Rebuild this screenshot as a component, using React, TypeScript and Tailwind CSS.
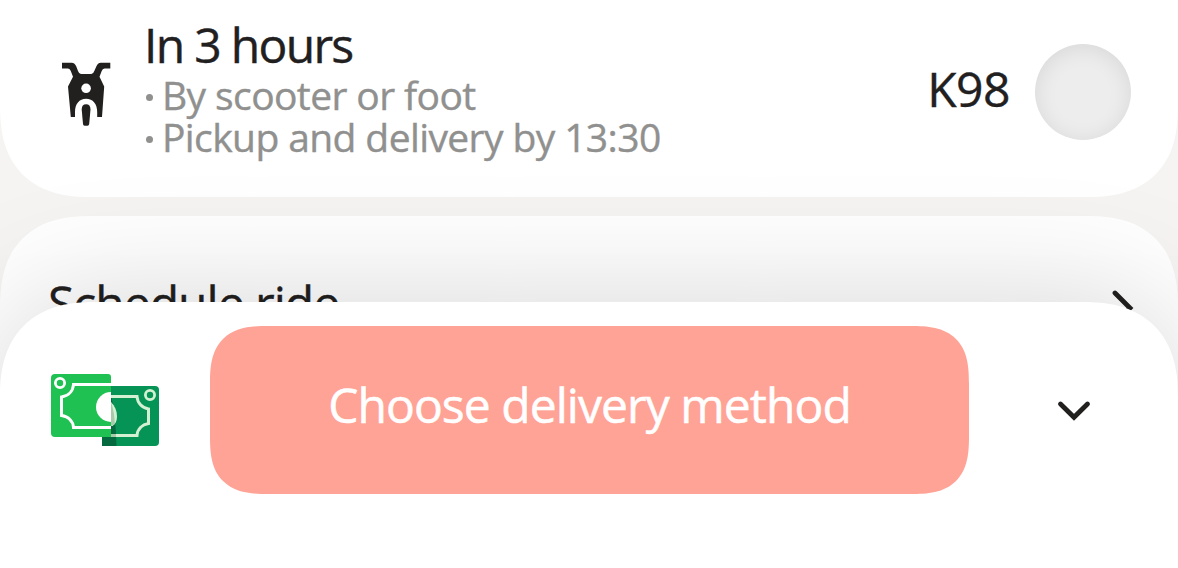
const ScooterIcon = () => (
  <svg width="50" height="66" viewBox="0 0 50 66" fill="none" className="shrink-0">
    <path
      d="M0 0.700H9.500C12 0.700 13.300 2 14.300 4.500L16 9Q17 12 19 12H29.300Q31.300 12 32.300 9L34.300 4.500C35.300 2 36.500 0.700 39 0.700H48.300V6.500H42.500Q40.500 6.500 39.700 9L37.500 14.700L42.200 24.500L40 55H35.200V50C35.200 42 31 36.700 24.100 36.700C17.200 36.700 13 42 13 50V55H8.800L6 24.500L11 14.700L8.800 9Q8 6.500 6 6.500H0Z"
      fill="#21201f"
    />
    <circle cx="24.100" cy="26.300" r="4.800" fill="#fff" />
    <path d="M19.700 47.500Q19.700 42.300 24.100 42.300T28.500 47.500L27.200 62Q27 63.800 25.500 63.800H22.500Q21.200 63.800 21 62Z" fill="#21201f" />
  </svg>
);

const CashIcon = () => (
  <svg width="108" height="72" viewBox="0 0 108 72" fill="none" className="shrink-0">
    <path d="M51 12H104A4 4 0 0 1 108 16V68A4 4 0 0 1 104 72H51Z" fill="#069456" />
    <path d="M51 63H60V20Q65 45 65.500 72H51Z" fill="#04693e" />
    <path d="M60 22.5H86C86.5 29 91 34 97.500 35V49.500C91 50.500 86.500 55 86 61.500H60" stroke="#d4f0d3" strokeWidth="3" />
    <circle cx="99" cy="21" r="4.600" stroke="#d4f0d3" strokeWidth="2.800" />
    <path d="M60 28C64 32 66 37 66 42.500C66 47 64.500 50 61.500 52H60Z" fill="#d4f0d3" />
    <path d="M60 28Q63.500 38 63.800 50L60 52Z" fill="#a9c9ab" />
    <path d="M60 60H65V63H60Z" fill="#a9c9ab" />
    <path d="M4 0H57A3 3 0 0 1 60 3V63H4A4 4 0 0 1 0 59V4A4 4 0 0 1 4 0Z" fill="#20c153" />
    <path d="M60 10.500H22.500C22 17 17.500 22 10.500 23V41.500C17.500 42.500 22 47 22.500 53.500H60" stroke="#fff" strokeWidth="3" />
    <circle cx="9" cy="9" r="4.600" stroke="#fff" strokeWidth="2.800" />
    <path d="M60 18A15 15 0 0 0 60 48Z" fill="#fff" />
  </svg>
);

const details = ["By scooter or foot", "Pickup and delivery by 13:30"];

const DeliveryOption = () => (
  <section className="flex h-[197px] shrink-0 items-start rounded-b-[92px] bg-white pr-[47px] pl-[62px] [corner-shape:superellipse(1.3)]">
    <div className="pt-[62px]">
      <ScooterIcon />
    </div>
    <div className="ml-8 grow pt-[17px]">
      <h2 className="text-[48px] leading-[56px] tracking-[-1.7px] text-[#21201f]">In 3 hours</h2>
      <ul className="mt-px text-[39px] leading-[42px] text-[#90908f]">
        {details.map((detail) => (
          <li key={detail} className="flex items-center gap-[9px]">
            <span className="mt-1 ml-[2px] size-[7px] rounded-full bg-[#90908f]" />
            <span className="tracking-[-0.6px] whitespace-nowrap">{detail}</span>
          </li>
        ))}
      </ul>
    </div>
    <span className="pt-[61px] text-[48px] leading-[56px] tracking-[-0.5px] text-[#21201f]">K98</span>
    <div className="mt-11 ml-[25px] size-24 shrink-0 rounded-full bg-[#ededed] shadow-[inset_0_3px_22px_rgba(0,0,0,0.09)]" />
  </section>
);

const ScheduleRow = () => (
  <section className="mt-[19px] flex h-[240px] shrink-0 items-start justify-between rounded-t-[92px] bg-white pr-[42px] pl-[48px] [corner-shape:superellipse(1.3)]">
    <span className="pt-[59px] text-[48px] leading-[56px] tracking-[-1px] text-[#21201f]">Schedule ride</span>
    <svg width="24" height="36" viewBox="0 0 24 36" fill="none" className="mt-[74px]">
      <path d="M3 3L18 18L3 33" stroke="#21201f" strokeWidth="4.8" strokeLinecap="round" />
    </svg>
  </section>
);

const OrderPanel = () => (
  <footer className="absolute inset-x-0 bottom-0 flex h-[266px] items-start rounded-t-[94px] bg-white pt-6 pl-[51px] shadow-[0_0_130px_rgba(0,0,0,0.17)] [corner-shape:superellipse(1.25)]">
    <div className="mt-12">
      <CashIcon />
    </div>
    <button className="ml-[51px] h-[168px] w-[759px] shrink-0 rounded-[58px] bg-[#ffa396] pb-[10px] text-[48px] tracking-[-0.95px] whitespace-nowrap text-white [-webkit-text-stroke:0.5px] [corner-shape:superellipse(1.45)]">
      Choose delivery method
    </button>
    <svg width="34" height="22" viewBox="0 0 34 22" fill="none" className="mt-[74px] ml-[88px]">
      <path d="M3.500 4L17 17.300L30.500 4" stroke="#21201f" strokeWidth="4.800" strokeLinecap="round" />
    </svg>
  </footer>
);

export default function App() {
  return (
    <main className="relative flex h-[568px] w-[1178px] flex-col overflow-hidden bg-[#f5f4f2] font-['Open_Sans','Noto_Sans',sans-serif] [-webkit-text-stroke:0.4px]">
      <DeliveryOption />
      <ScheduleRow />
      <OrderPanel />
    </main>
  );
}
